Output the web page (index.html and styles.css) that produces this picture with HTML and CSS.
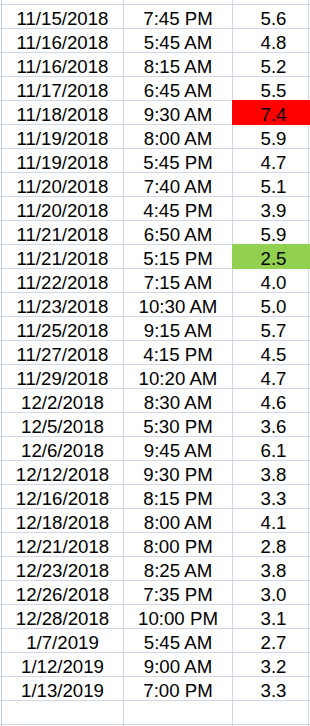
FILE: index.html
```html
<!DOCTYPE html>
<html>
<head>
<meta charset="utf-8">
<link rel="stylesheet" href="styles.css">
</head>
<body>
<div class="sheet">
  <div class="cell top"></div><div class="cell top"></div><div class="cell top"></div><div class="cell top"></div>

  <div class="cell">11/15/2018</div><div class="cell">7:45 PM</div><div class="cell val">5.6</div><div class="cell"></div>
  <div class="cell">11/16/2018</div><div class="cell">5:45 AM</div><div class="cell val">4.8</div><div class="cell"></div>
  <div class="cell">11/16/2018</div><div class="cell">8:15 AM</div><div class="cell val">5.2</div><div class="cell"></div>
  <div class="cell">11/17/2018</div><div class="cell">6:45 AM</div><div class="cell val">5.5</div><div class="cell"></div>
  <div class="cell">11/18/2018</div><div class="cell">9:30 AM</div><div class="cell val high">7.4</div><div class="cell high"></div>
  <div class="cell">11/19/2018</div><div class="cell">8:00 AM</div><div class="cell val">5.9</div><div class="cell"></div>
  <div class="cell">11/19/2018</div><div class="cell">5:45 PM</div><div class="cell val">4.7</div><div class="cell"></div>
  <div class="cell">11/20/2018</div><div class="cell">7:40 AM</div><div class="cell val">5.1</div><div class="cell"></div>
  <div class="cell">11/20/2018</div><div class="cell">4:45 PM</div><div class="cell val">3.9</div><div class="cell"></div>
  <div class="cell">11/21/2018</div><div class="cell">6:50 AM</div><div class="cell val">5.9</div><div class="cell"></div>
  <div class="cell">11/21/2018</div><div class="cell">5:15 PM</div><div class="cell val low">2.5</div><div class="cell low"></div>
  <div class="cell">11/22/2018</div><div class="cell">7:15 AM</div><div class="cell val">4.0</div><div class="cell"></div>
  <div class="cell">11/23/2018</div><div class="cell">10:30 AM</div><div class="cell val">5.0</div><div class="cell"></div>
  <div class="cell">11/25/2018</div><div class="cell">9:15 AM</div><div class="cell val">5.7</div><div class="cell"></div>
  <div class="cell">11/27/2018</div><div class="cell">4:15 PM</div><div class="cell val">4.5</div><div class="cell"></div>
  <div class="cell">11/29/2018</div><div class="cell">10:20 AM</div><div class="cell val">4.7</div><div class="cell"></div>
  <div class="cell">12/2/2018</div><div class="cell">8:30 AM</div><div class="cell val">4.6</div><div class="cell"></div>
  <div class="cell">12/5/2018</div><div class="cell">5:30 PM</div><div class="cell val">3.6</div><div class="cell"></div>
  <div class="cell">12/6/2018</div><div class="cell">9:45 AM</div><div class="cell val">6.1</div><div class="cell"></div>
  <div class="cell">12/12/2018</div><div class="cell">9:30 PM</div><div class="cell val">3.8</div><div class="cell"></div>
  <div class="cell">12/16/2018</div><div class="cell">8:15 PM</div><div class="cell val">3.3</div><div class="cell"></div>
  <div class="cell">12/18/2018</div><div class="cell">8:00 AM</div><div class="cell val">4.1</div><div class="cell"></div>
  <div class="cell">12/21/2018</div><div class="cell">8:00 PM</div><div class="cell val">2.8</div><div class="cell"></div>
  <div class="cell">12/23/2018</div><div class="cell">8:25 AM</div><div class="cell val">3.8</div><div class="cell"></div>
  <div class="cell">12/26/2018</div><div class="cell">7:35 PM</div><div class="cell val">3.0</div><div class="cell"></div>
  <div class="cell">12/28/2018</div><div class="cell">10:00 PM</div><div class="cell val">3.1</div><div class="cell"></div>
  <div class="cell">1/7/2019</div><div class="cell">5:45 AM</div><div class="cell val">2.7</div><div class="cell"></div>
  <div class="cell">1/12/2019</div><div class="cell">9:00 AM</div><div class="cell val">3.2</div><div class="cell"></div>
  <div class="cell">1/13/2019</div><div class="cell">7:00 PM</div><div class="cell val">3.3</div><div class="cell"></div>
  <div class="cell"></div><div class="cell"></div><div class="cell val"></div><div class="cell"></div>
  <div class="cell"></div><div class="cell"></div><div class="cell val"></div><div class="cell"></div>
</div>
</body>
</html>
```
FILE: styles.css
```css
html, body {
  margin: 0;
  padding: 0;
  background: #ffffff;
  overflow: hidden;
}

.sheet {
  margin-left: 1px;
  display: grid;
  grid-template-columns: 121px 108px 75px 1fr;
  grid-template-rows: 4px;
  grid-auto-rows: 23px;
  gap: 1px;
  background: #d0d7e5;
  border-left: 1px solid #c3cde0;
  font-family: "Liberation Sans", Arial, sans-serif;
  font-size: 18.67px;
  color: #000000;
}

.cell {
  background: #ffffff;
  text-align: center;
  white-space: nowrap;
  padding-top: 4px;
  line-height: 19px;
  height: 23px;
  box-sizing: border-box;
}

.cell.top {
  height: 4px;
  padding: 0;
}

.val {
  padding-left: 6px;
}

.high {
  background: #ff0000;
  outline: 1px solid #ff0000;
}

.low {
  background: #92d050;
  outline: 1px solid #92d050;
}
```
